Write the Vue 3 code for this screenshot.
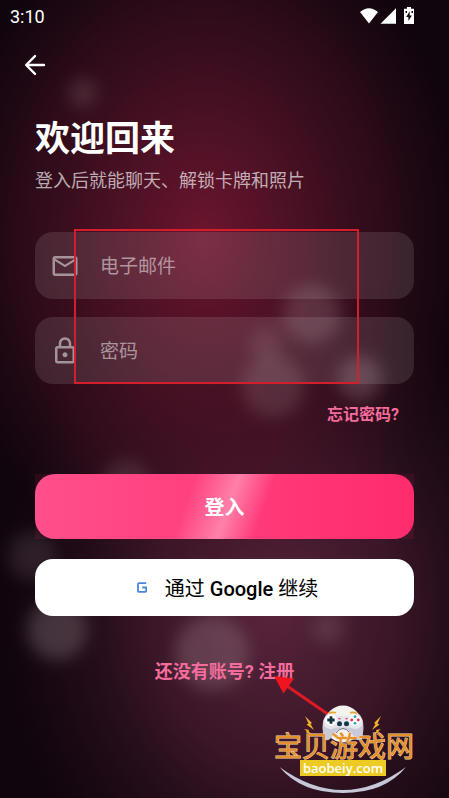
<script setup>
import { ref } from 'vue'

const email = ref('')
const password = ref('')

const bokeh = [
  { x: 83, y: 93, r: 14, o: 0.15 },
  { x: 312, y: 314, r: 29, o: 0.18 },
  { x: 266, y: 344, r: 17, o: 0.12 },
  { x: 273, y: 386, r: 31, o: 0.15 },
  { x: 360, y: 378, r: 22, o: 0.21 },
  { x: 126, y: 484, r: 24, o: 0.13 },
  { x: 32, y: 556, r: 24, o: 0.12 },
  { x: 57, y: 630, r: 30, o: 0.22 },
  { x: 212, y: 653, r: 37, o: 0.2 },
  { x: 328, y: 628, r: 16, o: 0.13 }
]
</script>

<template>
  <main class="screen">
    <svg class="backdrop" viewBox="0 0 449 798" preserveAspectRatio="xMidYMid slice" aria-hidden="true">
      <defs>
        <radialGradient id="glowTop" gradientUnits="userSpaceOnUse" cx="0" cy="0" r="1" gradientTransform="translate(204 240) scale(260 345)">
          <stop offset="0" stop-color="#6d152e" />
          <stop offset="0.35" stop-color="#561329" stop-opacity="0.84" />
          <stop offset="0.7" stop-color="#481124" stop-opacity="0.5" />
          <stop offset="1" stop-color="#3a0d1e" stop-opacity="0" />
        </radialGradient>
        <radialGradient id="glowBottom" gradientUnits="userSpaceOnUse" cx="0" cy="0" r="1" gradientTransform="translate(272 610) scale(270 340)">
          <stop offset="0" stop-color="#59243c" />
          <stop offset="0.45" stop-color="#471b2f" stop-opacity="0.78" />
          <stop offset="1" stop-color="#2c101f" stop-opacity="0" />
        </radialGradient>
        <filter id="soften" x="-75%" y="-75%" width="250%" height="250%">
          <feGaussianBlur stdDeviation="8" />
        </filter>
      </defs>
      <rect width="449" height="798" fill="#10050d" />
      <rect width="449" height="798" fill="url(#glowBottom)" />
      <rect width="449" height="798" fill="url(#glowTop)" />
      <circle
        v-for="(b, i) in bokeh"
        :key="i"
        :cx="b.x"
        :cy="b.y"
        :r="b.r"
        :fill-opacity="b.o"
        fill="#d8c8cc"
        filter="url(#soften)"
      />
    </svg>

    <header class="status">
      <span>3:10</span>
      <svg class="status-icons" viewBox="0 0 54 18" aria-hidden="true">
        <path d="M0 5Q9-2.600 18 5L9 16.400Z" fill="#fff" />
        <path d="M20.500 16.800L36 1.200V16.800Z" fill="#fff" />
        <path d="M47 0h4v1.800h3V17H44V1.800h3Z" fill="#fff" />
        <path d="M49.700 4.200L46.200 10h2.200v4l3.500-5.600h-2.200ZM45.500 4h1.500v2h-1.500ZM51.500 4H53v2h-1.500Z" fill="#15060d" />
      </svg>
    </header>

    <button class="back" type="button" aria-label="返回">
      <svg viewBox="0 0 24 24" aria-hidden="true">
        <path d="M19.200 12H5M12 4.900L4.900 12l7.100 7.100" fill="none" stroke="#fff" stroke-width="1.900" stroke-linecap="round" stroke-linejoin="round" />
      </svg>
    </button>

    <div class="content">
      <h1>欢迎回来</h1>
      <p class="subtitle">登入后就能聊天、解锁卡牌和照片</p>

      <form @submit.prevent>
        <div class="fields">
          <label class="field">
            <svg viewBox="0 0 24 24" aria-hidden="true">
              <path d="M22 6c0-1.100-.9-2-2-2H4c-1.100 0-2 .9-2 2v12c0 1.100.9 2 2 2h16c1.100 0 2-.9 2-2V6zm-2 0l-8 5-8-5h16zm0 12H4V8l8 5 8-5v10z" />
            </svg>
            <input v-model="email" type="email" placeholder="电子邮件" aria-label="电子邮件" />
          </label>
          <label class="field">
            <svg viewBox="0 0 24 24" aria-hidden="true">
              <path d="M18 8h-1V6c0-2.760-2.240-5-5-5S7 3.240 7 6v2H6c-1.100 0-2 .9-2 2v10c0 1.100.9 2 2 2h12c1.100 0 2-.9 2-2V10c0-1.100-.9-2-2-2zM9 6c0-1.660 1.340-3 3-3s3 1.340 3 3v2H9V6zm9 14H6V10h12v10zm-6-3c1.100 0 2-.9 2-2s-.9-2-2-2-2 .9-2 2 .9 2 2 2z" />
            </svg>
            <input v-model="password" type="password" placeholder="密码" aria-label="密码" />
          </label>
          <div class="highlight"></div>
        </div>

        <a class="forgot" href="#">忘记密码?</a>

        <div class="login-glow">
          <button class="login" type="submit">登入</button>
        </div>
        <button class="google" type="button">
          <svg viewBox="0 0 10 11" aria-hidden="true">
            <path d="M9.200 1.100H2Q1 1.100 1 2.100V8.900Q1 9.900 2 9.900H8.200Q9.200 9.900 9.200 8.900V5.500H5.200" fill="none" stroke="#4a86e0" stroke-width="1.800" />
          </svg>
          <span>通过 <b>Google</b> 继续</span>
        </button>
      </form>

      <a class="signup" href="#">还没有账号? 注册</a>
    </div>

    <svg class="watermark" viewBox="0 0 150 128" role="img" aria-label="宝贝游戏网 baobeiy.com">
      <path d="M62 47L17 16" stroke="#dc1a24" stroke-width="3" />
      <path d="M4 6L24 8.500L13.500 23.500Z" fill="#f0141e" />

      <circle cx="73" cy="54" r="18.500" fill="#f3f2ee" />
      <path d="M57 44Q73 49 89 44Q93.500 48 93.500 58L92.500 68Q90 72 86 69L81 63Q73 55 65 63L60 69Q56 72 53.500 68L52.500 58Q52.500 48 57 44Z" fill="#c9cad8" />
      <path d="M58 44.500Q73 48 88 44.500Q94 49 92 56Q87 61 80 57.500H66Q59 61 54 56Q52 49 58 44.500Z" fill="#e6e6ef" />
      <path d="M66 63Q73 54 80 63" fill="none" stroke="#77798c" stroke-width="1" />
      <path d="M59 43.500Q62 41.500 66 42.800M80 42.800Q84 41.500 87 43.500" fill="none" stroke="#e7a62d" stroke-width="1.700" />
      <circle cx="61" cy="50" r="5.800" fill="#fff" />
      <circle cx="85" cy="50" r="5.800" fill="#fff" />
      <path d="M61 46.300V53.700M57.300 50H64.700" stroke="#163644" stroke-width="2.800" />
      <circle cx="85" cy="46.700" r="1.400" fill="#25a5be" />
      <circle cx="85" cy="53.300" r="1.400" fill="#25a5be" />
      <circle cx="81.700" cy="50" r="1.400" fill="#df3448" />
      <circle cx="88.300" cy="50" r="1.400" fill="#df3448" />
      <circle cx="69.500" cy="53.700" r="2.500" fill="#163644" />
      <circle cx="76.500" cy="53.700" r="2.500" fill="#163644" />
      <path d="M68.500 48.700h2M75.500 48.700h2" stroke="#df3448" stroke-width="1.200" />

      <g fill="#f0b22b">
        <path d="M35 46L42 53L40.500 54L44 60L36.500 54.500L38.500 53.500Z" />
        <path d="M34 59L39 60L38.500 61.500L42 64L36 62.500L36.500 61Z" />
        <path d="M111 46L104 53L105.500 54L102 60L109.500 54.500L107.500 53.500Z" />
        <path d="M111 59L106 60L106.500 61.500L103 64L109 62.500L108.500 61Z" />
      </g>

      <text class="brand" x="74" y="87">宝贝游戏网</text>
      <path d="M9.500 97Q73 143 136 97Q115 123 73 123Q31 123 9.500 97Z" fill="#c6c8d8" />
      <rect x="30" y="90" width="86" height="16" fill="#edcb23" />
      <text class="domain" x="73" y="103">baobeiy.com</text>
    </svg>
  </main>
</template>

<style>
body {
  margin: 0;
  background: #10050d;
}
</style>

<style scoped>
.screen {
  position: relative;
  box-sizing: border-box;
  min-height: 100vh;
  overflow: hidden;
  color: #fff;
  font-family: Roboto, "Noto Sans CJK SC", sans-serif;
}

.screen > * {
  position: relative;
}

.screen > .backdrop {
  position: absolute;
  inset: 0;
  width: 100%;
  height: 100%;
}

.status {
  display: flex;
  align-items: center;
  justify-content: space-between;
  height: 32px;
  padding: 0 35px 0 10px;
  font-size: 18px;
  font-weight: 400;
}

.status-icons {
  width: 54px;
  height: 18px;
}

button {
  display: block;
  border: 0;
  padding: 0;
  font-family: inherit;
  cursor: pointer;
}

.back {
  margin: 18px 0 0 20px;
  background: none;
  color: #fff;
}

.back svg {
  display: block;
  width: 30px;
  height: 30px;
}

.content {
  display: flex;
  flex-direction: column;
  padding: 38px 35px 0;
}

h1 {
  margin: 0;
  font-size: 35px;
  line-height: 44px;
  font-weight: 700;
}

.subtitle {
  margin: 6px 0 0;
  font-size: 18px;
  line-height: 26px;
  color: rgba(255, 255, 255, 0.66);
  white-space: nowrap;
}

form {
  display: flex;
  flex-direction: column;
  margin-top: 38px;
}

.fields {
  position: relative;
  display: flex;
  flex-direction: column;
  gap: 18px;
}

.field {
  display: flex;
  align-items: center;
  gap: 20px;
  height: 67px;
  padding: 0 15px;
  border-radius: 18px;
  background: rgba(255, 255, 255, 0.11);
}

.field svg {
  flex: none;
  width: 30px;
  height: 30px;
  fill: rgba(255, 255, 255, 0.5);
}

.field input {
  flex: 1;
  min-width: 0;
  border: 0;
  padding: 2px 0 0;
  outline: 0;
  background: none;
  color: #fff;
  font-family: inherit;
  font-size: 19px;
  line-height: 28px;
}

.field input::placeholder {
  color: rgba(255, 255, 255, 0.5);
  opacity: 1;
}

.highlight {
  position: absolute;
  inset: -3px 55px 0 39px;
  border: 2px solid #d21f2b;
  pointer-events: none;
}

.forgot,
.signup {
  color: #f56c9c;
  font-weight: 700;
  text-decoration: none;
}

.forgot {
  align-self: flex-end;
  margin: 19px 15px 0 0;
  font-size: 16px;
  line-height: 24px;
}

.login-glow {
  margin-top: 47px;
  background: rgba(255, 60, 110, 0.09);
}

.login {
  width: 100%;
  height: 65px;
  border-radius: 20px;
  background:
    linear-gradient(110deg, transparent 40%, rgba(255, 255, 255, 0.35) 51%, transparent 60%),
    linear-gradient(90deg, #ff4f8b, #ff2b6d);
  color: #fff;
  font-size: 20px;
  font-weight: 700;
}

.google {
  display: flex;
  align-items: center;
  justify-content: center;
  gap: 18px;
  height: 57px;
  margin-top: 20px;
  padding-left: 6px;
  border-radius: 18px;
  background: #fff;
  color: #000;
  font-size: 20px;
}

.google svg {
  width: 10px;
  height: 11px;
}

.google b {
  font-weight: 500;
}

.signup {
  align-self: center;
  margin-top: 43px;
  font-size: 18px;
  line-height: 26px;
}

.screen > .watermark {
  position: absolute;
  right: 29px;
  bottom: 0;
  width: 150px;
  height: 128px;
}

.brand {
  fill: #e5902b;
  stroke: #f3d3a4;
  stroke-width: 1px;
  paint-order: stroke;
  font-size: 28px;
  font-weight: 400;
  text-anchor: middle;
}

.domain {
  fill: #fff;
  font-family: "Open Sans", "Noto Sans", sans-serif;
  font-size: 13px;
  font-weight: 600;
  text-anchor: middle;
}
</style>
